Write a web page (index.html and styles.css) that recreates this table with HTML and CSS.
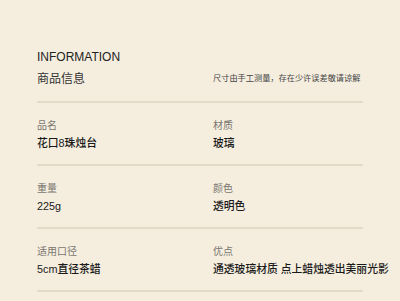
FILE: index.html
```html
<!DOCTYPE html>
<html lang="zh-CN">
<head>
    <meta charset="UTF-8">
    <meta name="viewport" content="width=device-width, initial-scale=1.0">
    <title>商品信息</title>
    <link rel="stylesheet" href="styles.css">
</head>
<body>
<div class="info">
    <div class="info-head">
        <div class="info-title">INFORMATION</div>
        <div class="info-sub">
            <span class="info-name">商品信息</span>
            <span class="info-note">尺寸由手工测量，存在少许误差敬请谅解</span>
        </div>
    </div>
    <div class="info-row">
        <div class="item">
            <div class="label">品名</div>
            <div class="value">花口8珠烛台</div>
        </div>
        <div class="item">
            <div class="label">材质</div>
            <div class="value">玻璃</div>
        </div>
    </div>
    <div class="info-row">
        <div class="item">
            <div class="label">重量</div>
            <div class="value">225g</div>
        </div>
        <div class="item">
            <div class="label">颜色</div>
            <div class="value">透明色</div>
        </div>
    </div>
    <div class="info-row">
        <div class="item">
            <div class="label">适用口径</div>
            <div class="value">5cm直径茶蜡</div>
        </div>
        <div class="item">
            <div class="label">优点</div>
            <div class="value nowrap">通透玻璃材质 点上蜡烛透出美丽光影</div>
        </div>
    </div>
</div>
</body>
</html>
```

FILE: styles.css
```css
body {
    margin: 0;
    padding: 0;
    background-color: #f5eedf;
    font-family: "Liberation Sans", "Noto Sans CJK SC", sans-serif;
    color: #222;
    overflow: hidden;
}
.info {
    width: 326px;
    margin-left: 37px;
    padding-top: 50px;
}
.info-head {
    padding-bottom: 14px;
    border-bottom: 2px solid #e3dac9;
}
.info-title {
    font-size: 12px;
    line-height: 14px;
    color: #222;
}
.info-sub {
    display: flex;
    justify-content: space-between;
    align-items: center;
    margin-top: 7px;
}
.info-name {
    font-size: 12px;
    line-height: 16px;
    color: #333;
}
.info-note {
    font-size: 8.2px;
    line-height: 12px;
    color: #444;
    width: 150px;
}
.info-row {
    display: grid;
    grid-template-columns: 176px 1fr;
    padding: 16px 0 14px;
    border-bottom: 2px solid #e3dac9;
}
.label {
    font-size: 10px;
    line-height: 13px;
    color: #7a7670;
}
.value {
    font-size: 10.8px;
    font-weight: 500;
    line-height: 14px;
    margin-top: 4px;
    color: #1a1a1a;
}
.nowrap {
    white-space: nowrap;
}
```
